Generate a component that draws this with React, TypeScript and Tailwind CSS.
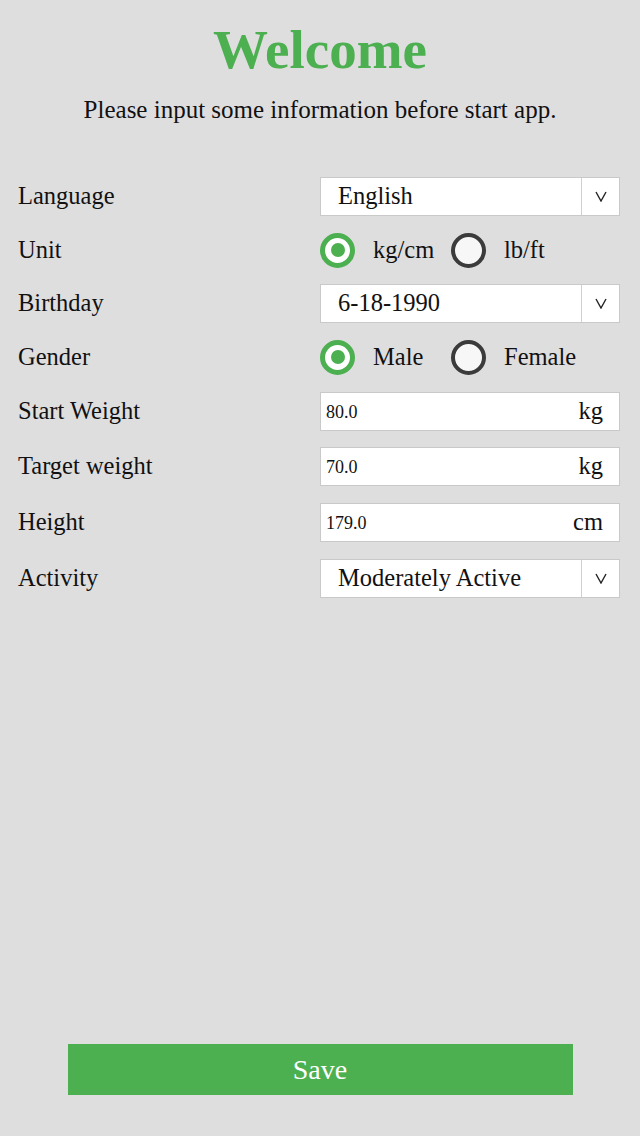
import React from "react";

const serif = { fontFamily: '"Liberation Serif", "Times New Roman", serif' };

function Chevron() {
  return (
    <svg width="12" height="11" viewBox="0 0 12 11" fill="none">
      <polyline points="1,1 6,10 11,1" stroke="#222" strokeWidth="1.4" fill="none" />
    </svg>
  );
}

function Select({ value }: { value: string }) {
  return (
    <div className="flex h-[39px] w-[300px] items-stretch border border-[#c9c9c9] bg-white">
      <div className="flex flex-1 items-center pl-[17px] text-[24.5px] text-[#111]">{value}</div>
      <div className="flex w-[38px] items-center justify-center border-l border-[#d0d0d0]">
        <Chevron />
      </div>
    </div>
  );
}

function Radio({ checked }: { checked: boolean }) {
  return checked ? (
    <div className="flex h-[35px] w-[35px] items-center justify-center rounded-full border-[5px] border-[#4caf50] bg-white">
      <div className="h-[14px] w-[14px] rounded-full bg-[#4caf50]" />
    </div>
  ) : (
    <div className="h-[35px] w-[35px] rounded-full border-[4px] border-[#3b3b3b] bg-[#f7f7f7]" />
  );
}

function RadioGroup({ a, b }: { a: string; b: string }) {
  return (
    <div className="flex w-[300px] items-center">
      <div className="flex w-[131px] items-center">
        <Radio checked />
        <span className="ml-[18px] text-[24.5px] text-[#111]">{a}</span>
      </div>
      <div className="flex items-center">
        <Radio checked={false} />
        <span className="ml-[18px] text-[24.5px] text-[#111]">{b}</span>
      </div>
    </div>
  );
}

function Input({ value, unit }: { value: string; unit: string }) {
  return (
    <div className="flex h-[39px] w-[300px] items-center justify-between border border-[#c9c9c9] bg-white pl-[5px] pr-[16px]">
      <span className="pt-[2px] text-[18px] text-[#111]">{value}</span>
      <span className="text-[24.5px] text-[#111]">{unit}</span>
    </div>
  );
}

function Row({ label, h, children }: { label: string; h: string; children: React.ReactNode }) {
  return (
    <div className={`flex items-center justify-between pl-[18px] pr-[20px] ${h}`}>
      <span className="text-[24.5px] text-[#111]">{label}</span>
      {children}
    </div>
  );
}

export default function App() {
  return (
    <div className="flex min-h-[1136px] flex-col bg-[#dfdedf]" style={serif}>
      <h1 className="mt-[22px] text-center text-[55px] font-bold leading-[56px] text-[#4caf50]">Welcome</h1>
      <p className="mt-[17px] text-center text-[25px] leading-[30px] text-[#111]">
        Please input some information before start app.
      </p>
      <div className="mt-[45px] flex flex-col">
        <Row label="Language" h="h-[53.5px]">
          <Select value="English" />
        </Row>
        <Row label="Unit" h="h-[53.5px]">
          <RadioGroup a="kg/cm" b="lb/ft" />
        </Row>
        <Row label="Birthday" h="h-[53.5px]">
          <Select value="6-18-1990" />
        </Row>
        <Row label="Gender" h="h-[53.5px]">
          <RadioGroup a="Male" b="Female" />
        </Row>
        <Row label="Start Weight" h="h-[54px]">
          <Input value="80.0" unit="kg" />
        </Row>
        <Row label="Target weight" h="h-[56px]">
          <Input value="70.0" unit="kg" />
        </Row>
        <Row label="Height" h="h-[56px]">
          <Input value="179.0" unit="cm" />
        </Row>
        <Row label="Activity" h="h-[56px]">
          <Select value="Moderately Active" />
        </Row>
      </div>
      <div className="mt-auto mb-[41px] flex justify-center">
        <button className="flex h-[51px] w-[505px] items-center justify-center bg-[#4caf50] text-[28px] text-white">
          Save
        </button>
      </div>
    </div>
  );
}
